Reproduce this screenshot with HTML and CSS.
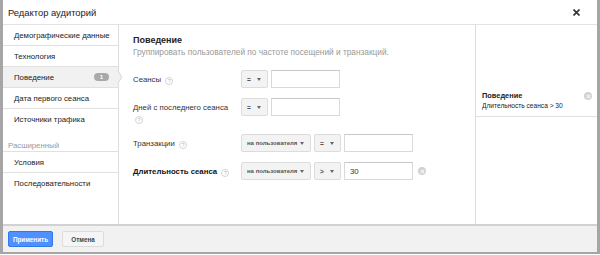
FILE: index.html
```html
<!DOCTYPE html>
<html lang="ru">
<head>
<meta charset="utf-8">
<title>Редактор аудиторий</title>
<link rel="stylesheet" href="styles.css">
</head>
<body>
<div class="dialog">
  <div class="header">
    <span class="title">Редактор аудиторий</span>
    <svg class="close" width="7" height="7" viewBox="0 0 7 7"><path d="M0.5 0.5L6.5 6.5M6.5 0.5L0.5 6.5" stroke="#333" stroke-width="1.6"/></svg>
  </div>
  <div class="body">
    <div class="sidebar">
      <div class="item">Демографические данные</div>
      <div class="item">Технология</div>
      <div class="item selected"><span>Поведение</span><span class="badge">1</span></div>
      <div class="item">Дата первого сеанса</div>
      <div class="item last">Источники трафика</div>
      <div class="group">Расширенный</div>
      <div class="item">Условия</div>
      <div class="item last">Последовательности</div>
    </div>
    <div class="main">
      <div class="main-title">Поведение</div>
      <div class="main-sub">Группировать пользователей по частоте посещений и транзакций.</div>
      <div class="form">
        <div class="row">
          <div class="label">Сеансы <span class="help">?</span></div>
          <div class="controls">
            <div class="select small">=<span class="caret"></span></div>
            <div class="input"></div>
          </div>
        </div>
        <div class="row">
          <div class="label">Дней с последнего сеанса <span class="help">?</span></div>
          <div class="controls">
            <div class="select small">=<span class="caret"></span></div>
            <div class="input"></div>
          </div>
        </div>
        <div class="row">
          <div class="label">Транзакции <span class="help">?</span></div>
          <div class="controls">
            <div class="select wide">на пользователя<span class="caret"></span></div>
            <div class="select small">=<span class="caret"></span></div>
            <div class="input"></div>
          </div>
        </div>
        <div class="row">
          <div class="label bold">Длительность сеанса <span class="help">?</span></div>
          <div class="controls">
            <div class="select wide">на пользователя<span class="caret"></span></div>
            <div class="select small">&gt;<span class="caret"></span></div>
            <div class="input">30</div>
            <span class="clear"></span>
          </div>
        </div>
      </div>
    </div>
    <div class="summary">
      <div class="sum-item">
        <div class="sum-text">
          <div class="sum-title">Поведение</div>
          <div class="sum-sub">Длительность сеанса &gt; 30</div>
        </div>
        <span class="clear"></span>
      </div>
    </div>
  </div>
  <div class="footer">
    <button class="btn primary">Применить</button>
    <button class="btn">Отмена</button>
  </div>
</div>
</body>
</html>
```

FILE: styles.css
```css
* { box-sizing: border-box; }
html, body { margin: 0; padding: 0; }
body {
  background: #fff;
  font-family: "Liberation Sans", Arial, sans-serif;
  color: #222;
  width: 600px;
  height: 255px;
  overflow: hidden;
}
.dialog {
  width: 600px;
  border-left: 3px solid #a6a6a6;
  border-right: 3px solid #a6a6a6;
  border-bottom: 2px solid #a6a6a6;
  background: #fff;
}
.header {
  height: 25px;
  border-bottom: 1px solid #e3e3e3;
  display: flex;
  align-items: center;
  justify-content: space-between;
  padding: 0 17px 0 5px;
}
.title { font-size: 9.4px; color: #222; }
.close { display: block; }
.body {
  display: flex;
  height: 199px;
}
.sidebar {
  width: 116px;
  border-right: 1px solid #ddd;
  flex: none;
}
.item {
  height: 21px;
  border-bottom: 1px solid #e0e0e0;
  font-size: 7.8px;
  color: #222;
  padding: 0 9px 0 11px;
  display: flex;
  align-items: center;
  justify-content: space-between;
  position: relative;
  white-space: nowrap;
}
.item.last { border-bottom: none; }
.item.selected { background: #f1f1f1; }
.item.selected::after {
  content: "";
  position: absolute;
  right: -5px;
  top: 5px;
  width: 9px;
  height: 9px;
  background: #f1f1f1;
  border-top: 1px solid #d6d6d6;
  border-right: 1px solid #d6d6d6;
  transform: scaleX(0.6) rotate(45deg);
}
.badge {
  background: #a9a9a9;
  color: #fff;
  font-size: 6px;
  font-weight: bold;
  width: 15px;
  height: 8px;
  border-radius: 4px;
  display: flex;
  align-items: center;
  justify-content: center;
}
.group {
  height: 21px;
  margin-top: 1px;
  padding: 10px 0 0 5px;
  font-size: 7.8px;
  color: #999;
  border-bottom: 1px solid #e0e0e0;
}
.main {
  width: 357px;
  flex: none;
  border-right: 1px solid #ddd;
  padding: 9px 14px 0 14px;
}
.main-title {
  font-size: 9px;
  font-weight: bold;
  line-height: 12px;
  color: #222;
}
.main-sub {
  font-size: 8.3px;
  line-height: 12px;
  color: #999;
  white-space: nowrap;
}
.form {
  margin-top: 12px;
  display: flex;
  flex-direction: column;
  gap: 10px;
}
.row {
  display: flex;
  align-items: flex-start;
}
.label {
  width: 108px;
  flex: none;
  padding: 4px 4px 0 0;
  font-size: 7.8px;
  line-height: 11px;
  color: #333;
}
.label.bold { font-weight: bold; color: #111; }
.help {
  display: inline-block;
  width: 8px;
  height: 8px;
  border: 1px solid #d4d4d4;
  border-radius: 50%;
  font-size: 5.5px;
  line-height: 6px;
  text-align: center;
  color: #bbb;
  font-weight: normal;
  vertical-align: -1px;
  margin-left: 2px;
}
.controls {
  display: flex;
  align-items: center;
  gap: 3px;
}
.select {
  height: 18px;
  background: #f3f3f3;
  border: 1px solid #dcdcdc;
  border-radius: 2px;
  font-size: 6.6px;
  font-weight: bold;
  color: #555;
  display: flex;
  align-items: center;
  justify-content: space-between;
  padding: 0 6px 0 5px;
  white-space: nowrap;
}
.select.small { width: 27px; }
.select.wide { width: 70px; padding-right: 6px; font-size: 6px; }
.caret {
  width: 0;
  height: 0;
  border-left: 2.5px solid transparent;
  border-right: 2.5px solid transparent;
  border-top: 3px solid #666;
}
.input {
  width: 69px;
  height: 18px;
  border: 1px solid #d9d9d9;
  border-top-color: #c8c8c8;
  background: #fff;
  font-size: 7.8px;
  color: #333;
  padding: 0 5px;
  display: flex;
  align-items: center;
}
.clear {
  width: 8px;
  height: 8px;
  border-radius: 50%;
  background: #d2d2d2;
  position: relative;
  margin-left: 2px;
  flex: none;
}
.clear::before, .clear::after {
  content: "";
  position: absolute;
  left: 1.5px;
  top: 3.5px;
  width: 5px;
  height: 1px;
  background: #fff;
  transform: rotate(45deg);
}
.clear::after { transform: rotate(-45deg); }
.summary {
  flex: 1;
  padding-top: 59px;
}
.sum-item {
  display: flex;
  justify-content: space-between;
  align-items: flex-start;
  padding: 7px 5px 5px 6px;
  border-bottom: 1px solid #e0e0e0;
}
.sum-title { font-size: 7.4px; font-weight: bold; line-height: 10px; color: #222; }
.sum-sub { font-size: 6.6px; line-height: 10px; color: #222; white-space: nowrap; }
.sum-item .clear { margin-top: 1px; }
.footer {
  height: 28px;
  border-top: 2px solid #d2d2d2;
  background: #f1f1f1;
  display: flex;
  align-items: flex-start;
  gap: 9px;
  padding: 5px 0 0 5px;
}
.btn {
  height: 16px;
  border: 1px solid #dcdcdc;
  background: #f5f5f5;
  border-radius: 2px;
  font-family: "Liberation Sans", Arial, sans-serif;
  font-size: 6.3px;
  font-weight: bold;
  color: #444;
  width: 42px;
  padding: 0;
}
.btn.primary {
  background: #4d90fe;
  border-color: #3079ed;
  color: #fff;
  width: 45px;
}
```
